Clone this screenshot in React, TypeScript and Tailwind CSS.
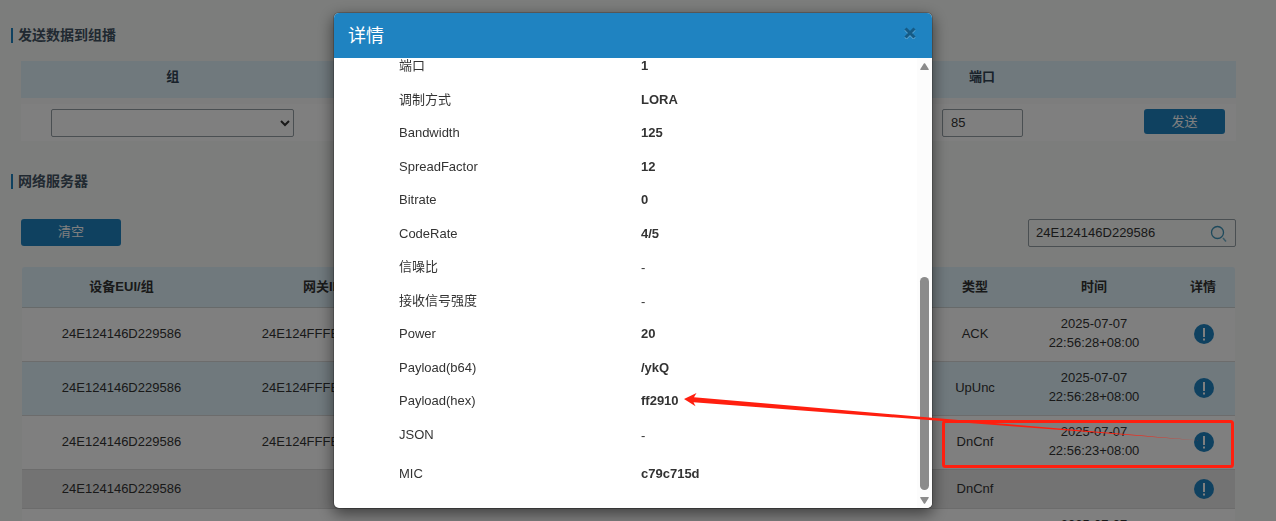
import * as React from 'react';

interface Packet {
  eui: string;
  gateway: string;
  type: string;
  date: string;
  time: string;
  rowClass: string;
}

const packets: Packet[] = [
  { eui: '24E124146D229586', gateway: '24E124FFFEF12257', type: 'ACK', date: '2025-07-07', time: '22:56:28+08:00', rowClass: 'h-[54px] bg-white' },
  { eui: '24E124146D229586', gateway: '24E124FFFEF12257', type: 'UpUnc', date: '2025-07-07', time: '22:56:28+08:00', rowClass: 'h-[54px] bg-[#e0f2fa]' },
  { eui: '24E124146D229586', gateway: '24E124FFFEF12257', type: 'DnCnf', date: '2025-07-07', time: '22:56:23+08:00', rowClass: 'h-[54px] bg-white' },
  { eui: '24E124146D229586', gateway: '', type: 'DnCnf', date: '', time: '', rowClass: 'h-[39px] bg-[#e6e6e6]' },
  { eui: '24E124146D229586', gateway: '24E124FFFEF12257', type: 'UpCnf', date: '2025-07-07', time: '22:56:23+08:00', rowClass: 'h-[54px] bg-white' },
];

const details = [
  { label: '端口', value: '1' },
  { label: '调制方式', value: 'LORA' },
  { label: 'Bandwidth', value: '125' },
  { label: 'SpreadFactor', value: '12' },
  { label: 'Bitrate', value: '0' },
  { label: 'CodeRate', value: '4/5' },
  { label: '信噪比', value: '-' },
  { label: '接收信号强度', value: '-' },
  { label: 'Power', value: '20' },
  { label: 'Payload(b64)', value: '/ykQ' },
  { label: 'Payload(hex)', value: 'ff2910' },
  { label: 'JSON', value: '-' },
  { label: 'MIC', value: 'c79c715d' },
];

const SectionTitle: React.FC<{ children: React.ReactNode }> = ({ children }) => (
  <h2 className="border-l-2 border-[#1f83c1] pl-[5px] text-sm leading-[15px] font-bold text-[#425262]">{children}</h2>
);

const InfoIcon = () => (
  <svg viewBox="0 0 20 20" className="h-5 w-5" aria-hidden="true">
    <circle cx="10" cy="10" r="10" fill="#1f83c1" />
    <path d="M9 4h2v9H9zM9 14.500h2v2H9z" fill="#fff" />
  </svg>
);

const MulticastForm = () => (
  <table className="mt-[18px] ml-[10px] w-[calc(100%-10px)] table-fixed border-collapse">
    <colgroup>
      <col className="w-1/4" />
      <col />
      <col className="w-[102px]" />
      <col className="w-[203px]" />
    </colgroup>
    <thead>
      <tr className="h-[37px] bg-[#e0f2fa] text-[#334455]">
        <th className="pb-[5px]" id="group-label">组</th>
        <td />
        <th className="pb-[5px]" id="port-label">端口</th>
        <td />
      </tr>
    </thead>
    <tbody>
      <tr className="h-[6px] bg-[#fbfbfb]">
        <td colSpan={4} />
      </tr>
      <tr className="h-[37px] bg-white align-top">
        <td className="pt-[5px] pr-[31px] pl-[30px]">
          <select aria-labelledby="group-label" className="block h-7 w-full rounded-[2px] border border-[#949ea4] bg-white">
            <option value="" />
          </select>
        </td>
        <td />
        <td className="pt-[5px] pr-[10px] pl-[11px]">
          <input aria-labelledby="port-label" defaultValue="85" className="block h-7 w-full rounded-[2px] border border-[#949ea4] bg-white px-2 pb-[2px]" />
        </td>
        <td className="pt-[5px] pr-[11px]">
          <button type="button" className="ml-auto block h-[25px] w-[81px] rounded-[3px] bg-[#1f83c1] text-white">
            发送
          </button>
        </td>
      </tr>
    </tbody>
  </table>
);

const PacketTable = () => (
  <div className="mt-5 mr-px ml-[11px] overflow-hidden rounded-t-[3px]">
    <table className="w-full table-fixed border-collapse text-center">
      <colgroup>
        <col className="w-[199px]" />
        <col className="w-[203px]" />
        <col />
        <col className="w-[84px]" />
        <col className="w-[154px]" />
        <col className="w-16" />
      </colgroup>
      <thead>
        <tr className="h-10 border-b border-[#cfd4d4] bg-[#e0f2fa]">
          <th>设备EUI/组</th>
          <th>网关ID</th>
          <td />
          <th>类型</th>
          <th>时间</th>
          <th>详情</th>
        </tr>
      </thead>
      <tbody>
        {packets.map((p, index) => (
          <tr key={index} className={`border-b border-[#d8d8d8] ${p.rowClass}`}>
            <td>{p.eui}</td>
            <td>{p.gateway}</td>
            <td />
            <td>{p.type}</td>
            <td className="pb-[2px] leading-[19px]">
              {p.date && (
                <>
                  {p.date}
                  <br />
                  {p.time}
                </>
              )}
            </td>
            <td className="pl-px">
              <button type="button" aria-label="详情" className="mx-auto block">
                <InfoIcon />
              </button>
            </td>
          </tr>
        ))}
      </tbody>
    </table>
  </div>
);

const DetailDialog = () => (
  <div className="fixed inset-0 z-10 flex items-start justify-center bg-black/50 pt-3 pr-[10px]">
    <div
      role="dialog"
      aria-labelledby="detail-title"
      className="w-[600px] overflow-hidden rounded-md border border-black/20 bg-white bg-clip-padding shadow-[0_5px_15px_rgba(0,0,0,0.5)]"
    >
      <div className="flex h-[45px] items-center justify-between bg-[#1f83c1] pr-4 pl-[14px]">
        <h4 id="detail-title" className="text-lg leading-6 text-white">详情</h4>
        <button type="button" aria-label="关闭" className="mb-[5px] opacity-30">
          <svg viewBox="0 0 12 12" className="h-3 w-3" aria-hidden="true">
            <path d="M1.5 2.500l9 9M10.5 2.500l-9 9" stroke="#fff" strokeWidth="3" />
            <path d="M1.5 1.500l9 9M10.5 1.500l-9 9" stroke="#000" strokeWidth="3" />
          </svg>
        </button>
      </div>
      <div className="flex h-[450px]">
        {/* scrolled to the last entry */}
        <div className="flex min-w-0 flex-1 flex-col justify-end overflow-hidden pb-3 pl-[65px]">
          <table className="w-full table-fixed border-collapse">
            <tbody>
              {details.map((d) => (
                <tr key={d.label} className="h-[34px] even:h-[33px] last:h-[45px]">
                  <th className="w-[242px] text-left font-normal">{d.label}</th>
                  <td className={d.value === '-' ? 'pt-[2px]' : 'font-bold'}>{d.value}</td>
                </tr>
              ))}
            </tbody>
          </table>
        </div>
        <div className="flex w-[15px] flex-col items-center bg-[#fcfcfc] pt-[5px] pb-1">
          <svg viewBox="0 0 9 7" className="h-[7px] w-[9px]" aria-hidden="true">
            <path d="M4.5 1L8 6.500H1z" fill="#8b8b8b" stroke="#8b8b8b" strokeWidth="1.500" strokeLinejoin="round" />
          </svg>
          <div className="flex w-[9px] flex-1 flex-col justify-end pb-[7px]">
            <div className="h-[213px] rounded-full bg-[#8b8b8b]" />
          </div>
          <svg viewBox="0 0 9 7" className="h-[7px] w-[9px]" aria-hidden="true">
            <path d="M4.5 6L1 .5h7z" fill="#8b8b8b" stroke="#8b8b8b" strokeWidth="1.500" strokeLinejoin="round" />
          </svg>
        </div>
      </div>
    </div>
  </div>
);

// Callout linking the highlighted packet to its payload
const Callout = () => (
  <svg width="1276" height="521" className="pointer-events-none fixed top-0 left-0 z-20" aria-hidden="true">
    <rect x="943.5" y="421.5" width="289" height="45" rx="2" fill="none" stroke="#ff1f0f" strokeWidth="3" />
    <path d="M684 399L696.5 393L694 397.300L932 417.800L1200 440.500L932 420.300L693.5 402.300L695.5 406.200Z" fill="#ff1f0f" />
  </svg>
);

export default function App() {
  return (
    <div className="h-screen overflow-hidden bg-[#f8faf8] font-['Liberation_Sans','Noto_Sans_CJK_SC',sans-serif] text-[13px] leading-5 text-[#333]">
      <main className="pt-7 pr-10 pl-[11px]">
        <SectionTitle>发送数据到组播</SectionTitle>
        <MulticastForm />
        <div className="mt-[33px]">
          <SectionTitle>网络服务器</SectionTitle>
        </div>
        <div className="mt-[30px] ml-[10px] flex items-start justify-between">
          <button type="button" className="h-[27px] w-[100px] rounded-[3px] bg-[#1f83c1] pb-[2px] text-white">
            清空
          </button>
          <div className="flex h-7 w-[208px] items-center rounded-[2px] border border-[#949ea4] pr-2 pl-[7px]">
            <input aria-label="搜索" defaultValue="24E124146D229586" className="min-w-0 flex-1 bg-transparent" />
            <button type="button" aria-label="搜索">
              <svg viewBox="0 0 18 18" className="h-[18px] w-[18px]" fill="none" stroke="#3d93b8" aria-hidden="true">
                <circle cx="8.5" cy="8.5" r="6" strokeWidth="1.300" />
                <path d="M14 14l3 3.500" strokeWidth="1.500" opacity="0.7" />
              </svg>
            </button>
          </div>
        </div>
        <PacketTable />
      </main>
      <DetailDialog />
      <Callout />
    </div>
  );
}
